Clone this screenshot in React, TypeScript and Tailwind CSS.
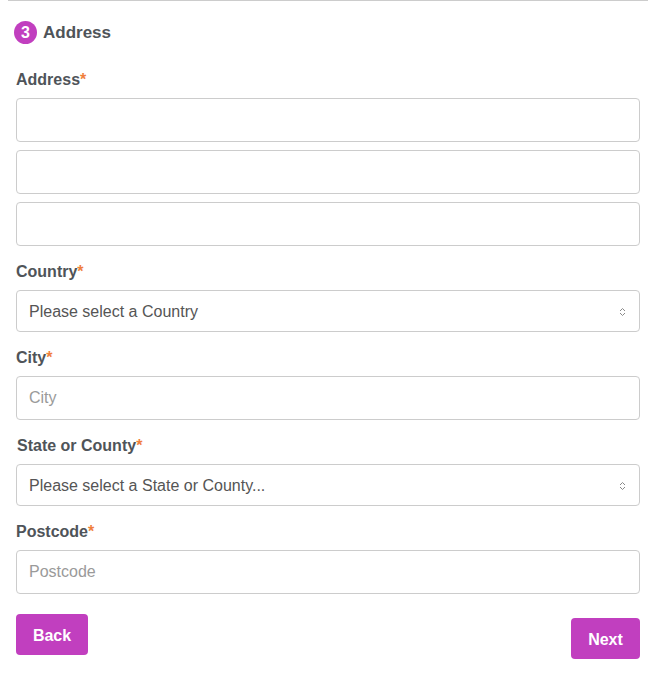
import React from 'react';

const Label = ({ text, className = '' }: { text: string; className?: string }) => (
  <label className={`block h-6 leading-6 text-[16px] font-bold text-[#4f5459] mb-[7px] ${className}`}>
    <span className="relative top-px">
      {text}
      <span className="text-[#f07f3c]">*</span>
    </span>
  </label>
);

const TextInput = ({ placeholder = '' }: { placeholder?: string }) => (
  <input
    placeholder={placeholder}
    className="block w-full h-[44px] px-3 border border-[#cccccc] rounded-[4px] text-[16px] text-[#555] placeholder:text-[#9a9a9a] outline-none"
  />
);

const SelectBox = ({ text }: { text: string }) => (
  <div className="flex items-center justify-between w-full h-[42px] pl-3 pr-[13px] pt-px border border-[#cccccc] rounded-[4px] text-[16px] text-[#555]">
    <span>{text}</span>
    <svg width="7" height="10" viewBox="0 0 7 10" fill="none" stroke="#8a8a8a" strokeWidth="1">
      <path d="M1 4 L3.5 1.5 L6 4" />
      <path d="M1 6 L3.5 8.5 L6 6" />
    </svg>
  </div>
);

export default function App() {
  return (
    <div className="w-[656px] h-[680px] bg-white" style={{ fontFamily: '"Liberation Sans", Arial, sans-serif' }}>
      <div className="mx-2 border-t border-[#cccccc]" />
      <div className="px-4">
        <div className="flex items-center gap-[6px] mt-5 -ml-[2px] h-[23px]">
          <span className="flex items-center justify-center w-[23px] h-[23px] rounded-full bg-[#c13fbf] text-white text-[16px] font-bold">
            3
          </span>
          <h2 className="text-[17px] font-bold text-[#4f5459]">Address</h2>
        </div>

        <div className="mt-[23px]">
          <Label text="Address" />
          <div className="flex flex-col gap-2">
            <TextInput />
            <TextInput />
            <TextInput />
          </div>
        </div>

        <div className="mt-[13px]">
          <Label text="Country" />
          <SelectBox text="Please select a Country" />
        </div>

        <div className="mt-[13px]">
          <Label text="City" />
          <TextInput placeholder="City" />
        </div>

        <div className="mt-[13px]">
          <Label text="State or County" className="ml-px" />
          <SelectBox text="Please select a State or County..." />
        </div>

        <div className="mt-[13px]">
          <Label text="Postcode" />
          <TextInput placeholder="Postcode" />
        </div>

        <div className="flex justify-between items-start mt-5">
          <button className="w-[72px] h-[41px] pt-[2px] rounded-[4px] bg-[#c13fbf] text-white text-[16px] font-bold">
            Back
          </button>
          <button className="mt-1 w-[69px] h-[41px] pt-[2px] rounded-[4px] bg-[#c13fbf] text-white text-[16px] font-bold">
            Next
          </button>
        </div>
      </div>
    </div>
  );
}
